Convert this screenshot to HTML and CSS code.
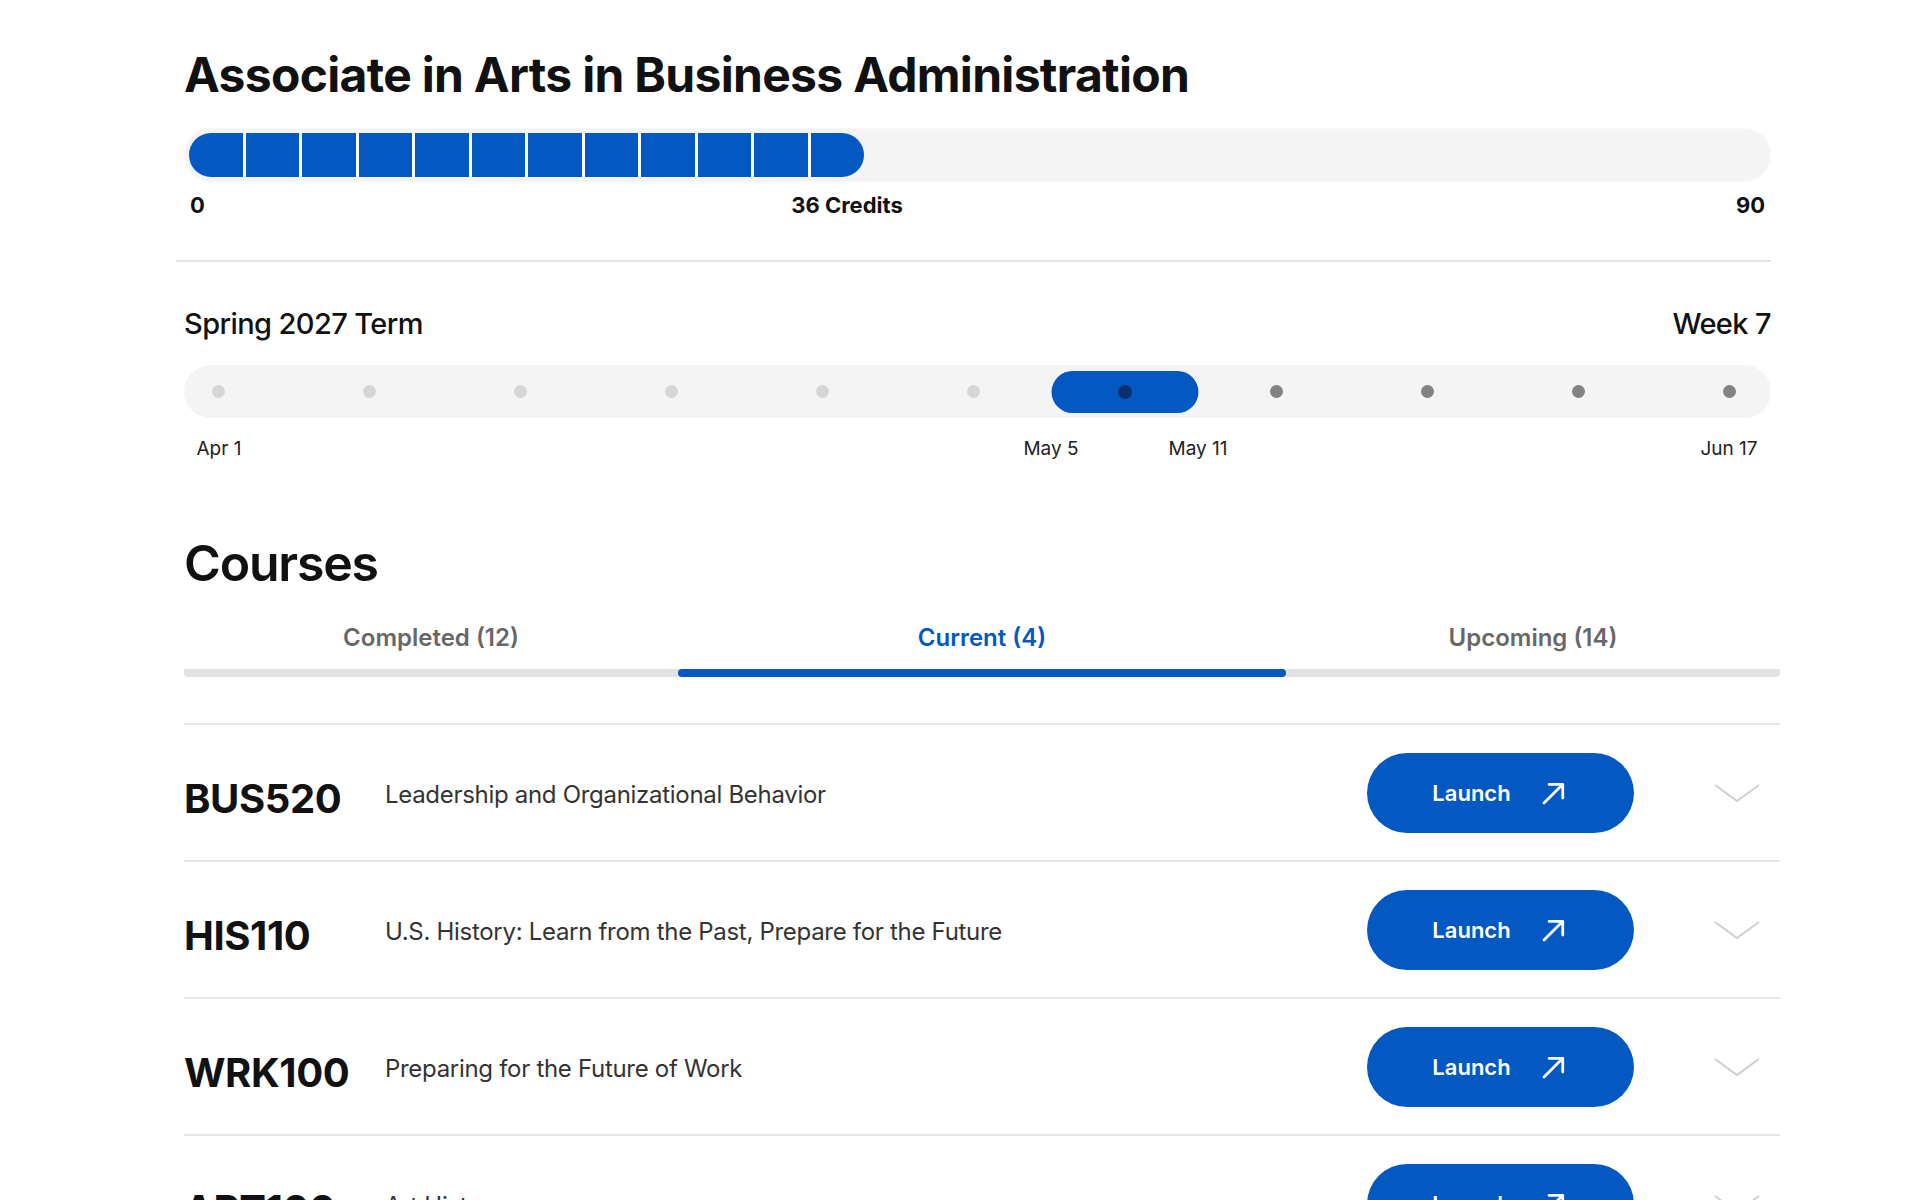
FILE: index.html
```
<!DOCTYPE html>
<html lang="en">
  <head>
    <meta charset="UTF-8" />
    <meta name="viewport" content="width=device-width, initial-scale=1.0" />
    <title>Degree Progress</title>
    <link rel="stylesheet" href="styles.css">
  </head>

  <body>
    <div class="page">
      <section class="program">
        <h1 class="program-title">Associate in Arts in Business Administration</h1>

        <div class="credits-track">
          <div class="credits-fill">
            <span class="seg"></span><span class="seg"></span><span class="seg"></span>
            <span class="seg"></span><span class="seg"></span><span class="seg"></span>
            <span class="seg"></span><span class="seg"></span><span class="seg"></span>
            <span class="seg"></span><span class="seg"></span><span class="seg"></span>
          </div>
        </div>
        <div class="credits-labels">
          <span class="credits-min">0</span>
          <span class="credits-now" style="left: 663px">36 Credits</span>
          <span class="credits-max">90</span>
        </div>
      </section>

      <hr class="divider" />

      <section class="term">
        <div class="term-head">
          <h2>Spring 2027 Term</h2>
          <span>Week 7</span>
        </div>

        <div class="weeks">
          <span class="tick past"></span>
          <span class="tick past"></span>
          <span class="tick past"></span>
          <span class="tick past"></span>
          <span class="tick past"></span>
          <span class="tick past"></span>
          <span class="tick current"></span>
          <span class="tick"></span>
          <span class="tick"></span>
          <span class="tick"></span>
          <span class="tick"></span>
        </div>
        <div class="week-dates">
          <span style="left: 35px">Apr 1</span>
          <span style="left: 867px">May 5</span>
          <span style="left: 1014px">May 11</span>
          <span style="left: 1545px">Jun 17</span>
        </div>
      </section>

      <section class="courses">
        <h2 class="courses-title">Courses</h2>

        <div class="tabs">
          <button class="tab">Completed (12)</button>
          <button class="tab active">Current (4)</button>
          <button class="tab">Upcoming (14)</button>
        </div>

        <ul class="course-list">
          <li class="course">
            <span class="course-code">BUS520</span>
            <span class="course-name">Leadership and Organizational Behavior</span>
            <a class="launch" href="#">Launch
              <svg viewBox="0 0 24 24" width="30" height="30"><path d="M4 20 L19 5 M8 5 H19 V16" /></svg>
            </a>
            <svg class="chevron" viewBox="0 0 48 20" width="48" height="20"><polyline points="2,2 24,18 46,2" /></svg>
          </li>
          <li class="course">
            <span class="course-code">HIS110</span>
            <span class="course-name">U.S. History: Learn from the Past, Prepare for the Future</span>
            <a class="launch" href="#">Launch
              <svg viewBox="0 0 24 24" width="30" height="30"><path d="M4 20 L19 5 M8 5 H19 V16" /></svg>
            </a>
            <svg class="chevron" viewBox="0 0 48 20" width="48" height="20"><polyline points="2,2 24,18 46,2" /></svg>
          </li>
          <li class="course">
            <span class="course-code">WRK100</span>
            <span class="course-name">Preparing for the Future of Work</span>
            <a class="launch" href="#">Launch
              <svg viewBox="0 0 24 24" width="30" height="30"><path d="M4 20 L19 5 M8 5 H19 V16" /></svg>
            </a>
            <svg class="chevron" viewBox="0 0 48 20" width="48" height="20"><polyline points="2,2 24,18 46,2" /></svg>
          </li>
          <li class="course">
            <span class="course-code">ART100</span>
            <span class="course-name">Art History</span>
            <a class="launch" href="#">Launch
              <svg viewBox="0 0 24 24" width="30" height="30"><path d="M4 20 L19 5 M8 5 H19 V16" /></svg>
            </a>
            <svg class="chevron" viewBox="0 0 48 20" width="48" height="20"><polyline points="2,2 24,18 46,2" /></svg>
          </li>
        </ul>
      </section>
    </div>
  </body>
</html>
```

FILE: styles.css
```
* {
  margin: 0;
  padding: 0;
  box-sizing: border-box;
}

body {
  font-family: "Inter", "Liberation Sans", sans-serif;
  color: #111;
  background: #fff;
  overflow: hidden;
}

.page {
  width: 1596px;
  margin-left: 184px;
  padding-top: 45px;
}

/* program credits */
.program,
.term {
  width: 1587px;
}

.program-title {
  font-size: 48px;
  line-height: 60px;
  font-weight: 700;
  letter-spacing: -0.7px;
}

.credits-track {
  margin-top: 23px;
  height: 54px;
  padding: 5px;
  border-radius: 27px;
  background: #f4f4f4;
  box-shadow: inset 0 0 0 1px #f8f8f8;
}

.credits-fill {
  width: 675px;
  height: 44px;
  display: flex;
  gap: 3px;
  border-radius: 22px;
  overflow: hidden;
  background: #fbfbfb;
}

.credits-fill .seg {
  flex: 1;
  background: #0358c1;
}

.credits-labels {
  position: relative;
  margin-top: 9px;
  display: flex;
  justify-content: space-between;
  padding: 0 6px;
  font-size: 22px;
  line-height: 28px;
  font-weight: 700;
}

.credits-now {
  position: absolute;
  top: 0;
  transform: translateX(-50%);
}

.divider {
  margin: 41px 0 0 -8px;
  width: 1595px;
  border: none;
  height: 2px;
  background: #e4e4e4;
}

/* term timeline */
.term-head {
  margin-top: 44px;
  display: flex;
  justify-content: space-between;
  align-items: center;
  font-size: 29px;
  line-height: 36px;
  font-weight: 500;
  letter-spacing: -0.6px;
}

.term-head h2 {
  font-size: inherit;
  font-weight: inherit;
}

.weeks {
  margin-top: 23px;
  height: 53px;
  border-radius: 27px;
  background: #f4f4f4;
  display: flex;
  justify-content: space-between;
  align-items: center;
  padding: 0 35px 0 28px;
}

.tick {
  position: relative;
  width: 13px;
  height: 13px;
  border-radius: 50%;
  background: #828282;
}

.tick.past {
  background: #d5d5d5;
}

.tick.current {
  background: none;
}

.tick.current::before,
.tick.current::after {
  content: "";
  position: absolute;
  left: 50%;
  top: 50%;
  transform: translate(-50%, -50%);
}

.tick.current::before {
  width: 147px;
  height: 42px;
  border-radius: 21px;
  background: #0358c1;
}

.tick.current::after {
  width: 14px;
  height: 14px;
  border-radius: 50%;
  background: #0b2f6c;
}

.week-dates {
  position: relative;
  margin-top: 19px;
  height: 24px;
  font-size: 19px;
  line-height: 24px;
  color: #222;
}

.week-dates span {
  position: absolute;
  top: 0;
  transform: translateX(-50%);
  white-space: nowrap;
}

/* courses */
.courses-title {
  margin-top: 71px;
  font-size: 50px;
  line-height: 62px;
  font-weight: 600;
  letter-spacing: -1.2px;
}

.tabs {
  margin-top: 29px;
  display: grid;
  grid-template-columns: 494px 608px 494px;
}

.tab {
  border: none;
  background: none;
  font-family: inherit;
  font-size: 24px;
  line-height: 30px;
  font-weight: 600;
  color: #676767;
  padding-bottom: 16px;
  border-bottom: 8px solid #e2e2e2;
  cursor: pointer;
}

.tab:first-child {
  border-bottom-left-radius: 4px;
}

.tab:last-child {
  border-bottom-right-radius: 4px;
}

.tab.active {
  color: #0358c1;
  position: relative;
}

.tab.active::after {
  content: "";
  position: absolute;
  left: 0;
  right: 0;
  bottom: -8px;
  height: 8px;
  border-radius: 4px;
  background: #0358c1;
}

.course-list {
  list-style: none;
  margin-top: 46px;
  border-top: 2px solid #e6e6e6;
}

.course {
  height: 137px;
  display: grid;
  grid-template-columns: 201px 982px 267px 146px;
  align-items: center;
  border-bottom: 2px solid #e6e6e6;
}

.course-code {
  padding-top: 12px;
  font-size: 40px;
  font-weight: 700;
  letter-spacing: -0.4px;
}

.course-name {
  padding-top: 4px;
  font-size: 24px;
  color: #333;
  letter-spacing: -0.3px;
}

.launch {
  height: 80px;
  border-radius: 40px;
  background: #0358c1;
  color: #fff;
  text-decoration: none;
  display: flex;
  justify-content: center;
  align-items: center;
  gap: 28px;
  font-size: 22px;
  font-weight: 600;
}

.launch svg {
  fill: none;
  stroke: #fff;
  stroke-width: 2.2;
  stroke-linecap: round;
  stroke-linejoin: round;
}

.chevron {
  justify-self: end;
  margin-right: 19px;
  fill: none;
  stroke: #cfcfcf;
  stroke-width: 2;
}
```
